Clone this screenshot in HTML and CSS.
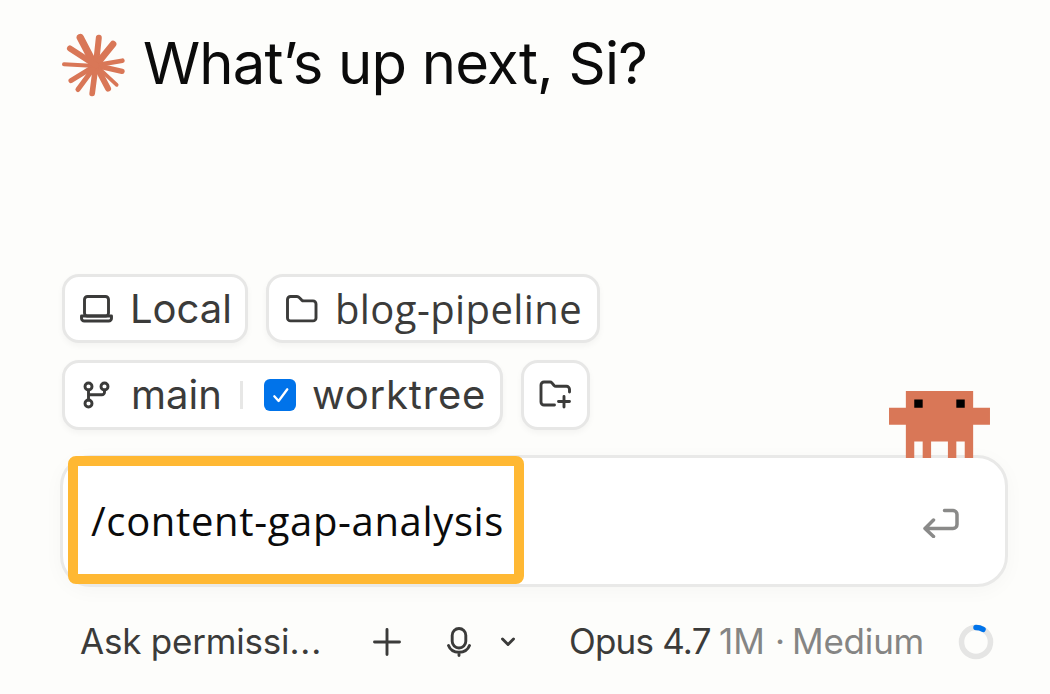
FILE: index.html
```
<!DOCTYPE html>
<html lang="en">
<head>
    <meta charset="UTF-8">
    <meta name="viewport" content="width=device-width, initial-scale=1.0">
    <title>What’s up next?</title>
    <link rel="stylesheet" href="styles.css">
</head>
<body>
    <header class="greeting">
        <svg class="spark" viewBox="36 40 190 192">
            <circle cx="138" cy="137" r="23" fill="#d97757"/>
            <g stroke="#d97757" stroke-linecap="round">
                <path stroke-width="22" d="M91 53 135 137"/>
                <path stroke-width="18" d="M147 54 138 137"/>
                <path stroke-width="20" d="M190 73 138 137"/>
                <path stroke-width="14" d="M218 123 138 137"/>
                <path stroke-width="16" d="M217 155 138 137"/>
                <path stroke-width="11" d="M201 196 138 137"/>
                <path stroke-width="18" d="M175 207 138 137"/>
                <path stroke-width="17" d="M127 222 138 137"/>
                <path stroke-width="15" d="M84 210 138 137"/>
                <path stroke-width="15" d="M63 183 138 137"/>
                <path stroke-width="12" d="M42 134 138 139"/>
                <path stroke-width="18" d="M60 86 138 137"/>
            </g>
        </svg>
        <h1 class="title">What’s up next, Si?</h1>
    </header>

    <main>
        <div class="chips">
            <div class="chip">
                <svg class="icon" width="34" height="28" viewBox="0 0 34 28">
                    <rect x="4.5" y="1.5" width="24" height="19.5" rx="3"/>
                    <path d="M1.5 21h30v2.2a2.8 2.8 0 0 1-2.8 2.8H4.300a2.8 2.8 0 0 1-2.8-2.8z"/>
                </svg>
                <span class="text local">Local</span>
            </div>
            <div class="chip folder-chip">
                <svg class="icon" width="32" height="28" viewBox="0 0 32 28">
                    <path d="M1.500 4.500a3 3 0 0 1 3-3h6.500a3 3 0 0 1 2.200 1l2.500 2.600a3 3 0 0 0 2 .8H27a3 3 0 0 1 3 3v14a3 3 0 0 1-3 3H4.500a3 3 0 0 1-3-3z"/>
                </svg>
                <span class="text blog">blog-pipeline</span>
            </div>
        </div>
        <div class="chips branch-row">
            <div class="chip branch-chip">
                <svg class="icon branch" width="28" height="28" viewBox="0 0 28 28">
                    <circle cx="5.500" cy="5.500" r="3.500"/>
                    <circle cx="21.500" cy="5.500" r="3.500"/>
                    <circle cx="5.500" cy="22.500" r="3.500"/>
                    <path d="M5.500 9v10M21.500 9v2.200a2.600 2.600 0 0 1-2.600 2.600H5.500"/>
                </svg>
                <span class="text main">main</span>
                <span class="divider"></span>
                <span class="checkbox">
                    <svg width="32" height="32" viewBox="0 0 32 32">
                        <path d="M10.300 17.300 14.600 22 23.300 10.300" fill="none" stroke="#fff" stroke-width="2.300" stroke-linecap="round" stroke-linejoin="round"/>
                    </svg>
                </span>
                <span class="text tree">worktree</span>
            </div>
            <div class="chip add-chip">
                <svg class="icon" width="32" height="30" viewBox="0 0 32 30">
                    <path d="M15.500 25H5a3 3 0 0 1-3-3V5a3 3 0 0 1 3-3h6a2.500 2.500 0 0 1 1.900.9l2.200 2.600a2.500 2.500 0 0 0 1.900.8h10.500a3 3 0 0 1 3 3V12M25 16.500v10.500M19.500 21.500h11"/>
                </svg>
            </div>
        </div>

        <div class="prompt">
            <svg class="crab" viewBox="0 0 12 8">
                <path fill="#d97757" d="M2 0h8v2h2v2h-2v4H9V6H8v2H7V6H5v2H4V6H3v2H2V4H0V2h2z"/>
                <path d="M3 1h1v1H3zM8 1h1v1H8z"/>
            </svg>
            <div class="highlight"><span class="command">/content-gap-analysis</span></div>
            <svg class="enter" width="36" height="30" viewBox="0 0 36 30">
                <path d="M21.500 2.500H30a4 4 0 0 1 4 4v10a4 4 0 0 1-4 4H2.500M10.500 12 2 20.500l8.500 8"/>
            </svg>
        </div>
    </main>

    <footer class="toolbar">
        <span class="ask">Ask permissi<span class="dots">...</span></span>
        <svg class="icon plus" width="28" height="28" viewBox="0 0 28 28"><path d="M14 1.500v25M1.500 14h25"/></svg>
        <svg class="icon mic" width="24" height="30" viewBox="0 0 24 30">
            <rect x="5.200" y="1.500" width="13.600" height="19.500" rx="6.800"/>
            <path d="M1.500 18.500c1.500 4 5.500 6.700 10.500 6.700s9-2.700 10.500-6.700M12 25.200v3.300"/>
        </svg>
        <svg class="icon chevron" width="14" height="10" viewBox="0 0 14 10"><path d="M1.500 2 7 7.500 12.500 2"/></svg>
        <span class="model">Opus 4.7</span>
        <span class="size">1M</span>
        <span class="dot">·</span>
        <span class="effort">Medium</span>
        <svg class="usage" width="36" height="36" viewBox="0 0 36 36">
            <circle cx="18" cy="18" r="14.500" fill="none" stroke="#e5e5e4" stroke-width="5.500"/>
            <path d="M18 3.500a14.500 14.500 0 0 1 7 1.800" fill="none" stroke="#0073ea" stroke-width="5.500" stroke-linecap="round"/>
        </svg>
    </footer>
</body>
</html>
```
FILE: styles.css
```
* {
    box-sizing: border-box;
}

body {
    margin: 0;
    height: 694px;
    overflow: hidden;
    background: #fdfdfb;
    color: #0b0b0b;
    font-family: Inter, "Liberation Sans", sans-serif;
}

svg {
    display: block;
    flex: none;
}

.greeting {
    display: flex;
    height: 274px;
    padding: 33px 0 0 62px;
}

.spark {
    width: 63px;
    height: 64px;
}

.title {
    margin: -3px 0 0 18px;
    font-size: 58px;
    line-height: 66px;
    font-weight: 400;
    letter-spacing: -0.8px;
    white-space: nowrap;
}

.chips {
    display: flex;
    gap: 18px;
    height: 69px;
    margin: 0 0 17px 62px;
}

.branch-row {
    height: 70px;
}

.chip {
    display: flex;
    align-items: center;
    padding: 0 0 0 15px;
    width: 186px;
    border: 3px solid #e7e7e6;
    border-radius: 17px;
    background: #fff;
    box-shadow: 0 3px 6px rgba(0, 0, 0, 0.04);
    color: #3b3b3a;
}

.folder-chip {
    width: 334px;
    padding-left: 17px;
}

.branch-chip {
    width: 441px;
    padding-left: 18px;
}

.add-chip {
    width: 69px;
}

.icon {
    fill: none;
    stroke: #3b3b3a;
    stroke-width: 2.9;
    stroke-linecap: round;
    stroke-linejoin: round;
}

.text {
    font-size: 40px;
    line-height: 60px;
    white-space: nowrap;
}

.local {
    margin-left: 16px;
}

.blog {
    margin-left: 17px;
    font-family: "Open Sans", sans-serif;
    letter-spacing: 0.4px;
}

.main {
    width: 92px;
    margin-left: 20px;
}

.divider {
    flex: none;
    width: 3px;
    height: 28px;
    margin-left: 17px;
    background: #e7e7e6;
}

.checkbox {
    flex: none;
    width: 32px;
    height: 32px;
    margin: 0 16px 0 21px;
    border-radius: 6px;
    background: #0073ea;
}

.tree {
    letter-spacing: 0.8px;
}

.prompt {
    position: relative;
    display: flex;
    align-items: center;
    justify-content: space-between;
    width: 948px;
    height: 132px;
    margin: 25px 0 0 60px;
    padding: 0 46px 0 5px;
    border: 3px solid #e9e9e8;
    border-radius: 31px;
    background: #fff;
    box-shadow: 0 4px 20px rgba(0, 0, 0, 0.03);
}

.highlight {
    width: 456px;
    height: 128px;
    margin-top: -2px;
    padding-left: 13px;
    border: 10px solid #ffb833;
    border-radius: 8px;
}

.command {
    font-family: "Open Sans", sans-serif;
    font-size: 40px;
    line-height: 110px;
    letter-spacing: 0.65px;
    white-space: nowrap;
}

.enter {
    margin-top: 3px;
    fill: none;
    stroke: #8a8a89;
    stroke-width: 3.5;
    stroke-linecap: round;
    stroke-linejoin: round;
}

/* sits on the top edge of the prompt */
.crab {
    position: absolute;
    top: -67.500px;
    right: 15px;
    width: 101px;
    height: 67.300px;
}

.toolbar {
    display: flex;
    align-items: center;
    height: 60px;
    margin-top: 25px;
    padding-left: 80px;
    color: #3b3b3a;
    font-size: 35px;
    white-space: nowrap;
}

.toolbar > span {
    padding-bottom: 2px;
}

.ask {
    width: 293px;
    letter-spacing: -0.2px;
}

.dots {
    letter-spacing: 0.8px;
}

.mic {
    margin-left: 46px;
}

.chevron {
    margin-left: 30px;
}

.model {
    width: 150px;
    margin-left: 54px;
    letter-spacing: -0.8px;
}

.size,
.dot,
.effort {
    color: #858584;
}

.size {
    width: 56px;
}

.dot {
    width: 17px;
}

.effort {
    width: 166px;
    letter-spacing: -0.2px;
}
```
